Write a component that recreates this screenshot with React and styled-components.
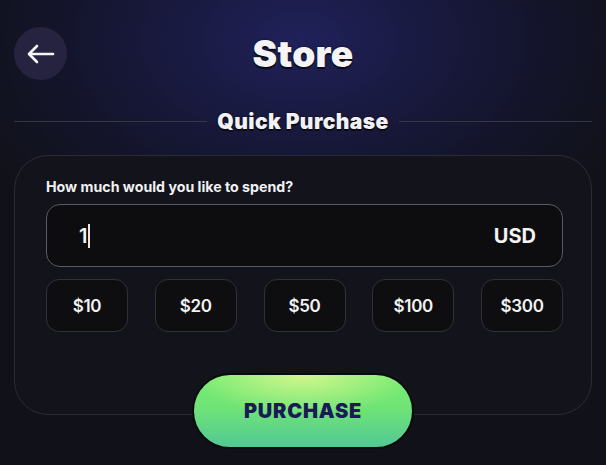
import styled, { createGlobalStyle } from 'styled-components'

const Global = createGlobalStyle`
  html, body { margin: 0; padding: 0; }
  body {
    background: #111219;
    font-family: Inter, "Noto Sans", sans-serif;
    color: #fff;
  }
`

const Page = styled.div`
  width: 606px;
  height: 465px;
  overflow: hidden;
  box-sizing: border-box;
  padding: 27px 14px 0;
  background:
    radial-gradient(ellipse 360px 230px at 300px 40px, #20215a 0%, #191a40 35%, #131429 70%, rgba(17,18,25,0) 100%),
    #111219;
`

const Header = styled.div`
  display: grid;
  grid-template-columns: 53px 1fr 53px;
  align-items: center;
  height: 53px;
`

const BackButton = styled.button`
  width: 53px;
  height: 53px;
  border-radius: 50%;
  border: none;
  background: #25233f;
  display: flex;
  align-items: center;
  justify-content: center;
  padding: 0;
`

const Title = styled.h1`
  margin: 0;
  text-align: center;
  font-family: Inter, sans-serif;
  font-weight: 900;
  font-size: 37px;
  letter-spacing: 0.3px;
  color: #f4f4f6;
  text-shadow: 0 2px 0 #0b0b14, 0 0 2px #0b0b14;
`

const Divider = styled.div`
  display: flex;
  align-items: center;
  gap: 10px;
  margin-top: 29px;
  &::before, &::after {
    content: '';
    flex: 1;
    height: 1px;
    background: #363746;
  }
`

const DividerLabel = styled.span`
  font-family: Inter, sans-serif;
  font-weight: 900;
  font-size: 21px;
  letter-spacing: 0.4px;
  color: #f2f2f4;
  text-shadow: 0 2px 0 #0b0b14, 0 0 2px #0b0b14;
`

const Card = styled.div`
  margin-top: 21px;
  height: 260px;
  box-sizing: border-box;
  border: 1.5px solid #2a2b34;
  border-radius: 34px;
  background: #13141b;
  padding: 22px 28px 0 31px;
`

const Label = styled.div`
  font-family: Inter, sans-serif;
  font-weight: 700;
  font-size: 14.2px;
  color: #f1f1f3;
`

const AmountField = styled.div`
  margin-top: 9px;
  height: 63px;
  box-sizing: border-box;
  border: 1.5px solid #5a5a66;
  border-radius: 14px;
  background: #0d0d0f;
  display: flex;
  align-items: center;
  justify-content: space-between;
  padding: 0 26px 0 32px;
`

const AmountValue = styled.span`
  font-family: Inter, sans-serif;
  font-weight: 600;
  font-size: 20px;
  color: #f4f4f4;
  display: flex;
  align-items: center;
  &::after {
    content: '';
    width: 1.5px;
    height: 24px;
    margin-left: 1px;
    background: #e8e8e8;
  }
`

const Currency = styled.span`
  font-family: Inter, sans-serif;
  font-weight: 700;
  font-size: 20px;
  color: #f4f4f4;
`

const Presets = styled.div`
  margin-top: 12px;
  display: grid;
  grid-template-columns: repeat(5, 82px);
  justify-content: space-between;
`

const Preset = styled.button`
  height: 53px;
  border: 1.5px solid #2f3039;
  border-radius: 13px;
  background: #0e0e11;
  color: #f2f2f2;
  font-family: Inter, sans-serif;
  font-weight: 600;
  font-size: 17px;
  letter-spacing: -0.3px;
  padding: 0;
`

const Footer = styled.div`
  display: flex;
  justify-content: center;
  margin-top: -42px;
`

const PurchaseButton = styled.button`
  width: 222px;
  height: 76px;
  border-radius: 38px;
  border: 2px solid #0a0b0c;
  background:
    radial-gradient(ellipse 110px 40px at 50% 0%, rgba(240, 250, 150, 0.75), rgba(240, 250, 150, 0) 100%),
    linear-gradient(180deg, #79ec72 0%, #6fe476 45%, #52c896 100%);
  color: #1a1a55;
  font-family: Inter, sans-serif;
  font-weight: 900;
  font-size: 20px;
  letter-spacing: 0.8px;
  padding: 0;
`

const presets = [10, 20, 50, 100, 300]

export default function App() {
  return (
    <>
      <Global />
      <Page>
        <Header>
          <BackButton aria-label="Back">
            <svg width="30" height="22" viewBox="0 0 30 22" fill="none" stroke="#f5f5f7" strokeWidth="2.6" strokeLinecap="round" strokeLinejoin="round">
              <path d="M11 3 L3 11 L11 19" />
              <path d="M4 11 H27" />
            </svg>
          </BackButton>
          <Title>Store</Title>
          <span />
        </Header>
        <Divider>
          <DividerLabel>Quick Purchase</DividerLabel>
        </Divider>
        <Card>
          <Label>How much would you like to spend?</Label>
          <AmountField>
            <AmountValue>1</AmountValue>
            <Currency>USD</Currency>
          </AmountField>
          <Presets>
            {presets.map(p => (
              <Preset key={p}>${p}</Preset>
            ))}
          </Presets>
        </Card>
        <Footer>
          <PurchaseButton>PURCHASE</PurchaseButton>
        </Footer>
      </Page>
    </>
  )
}
